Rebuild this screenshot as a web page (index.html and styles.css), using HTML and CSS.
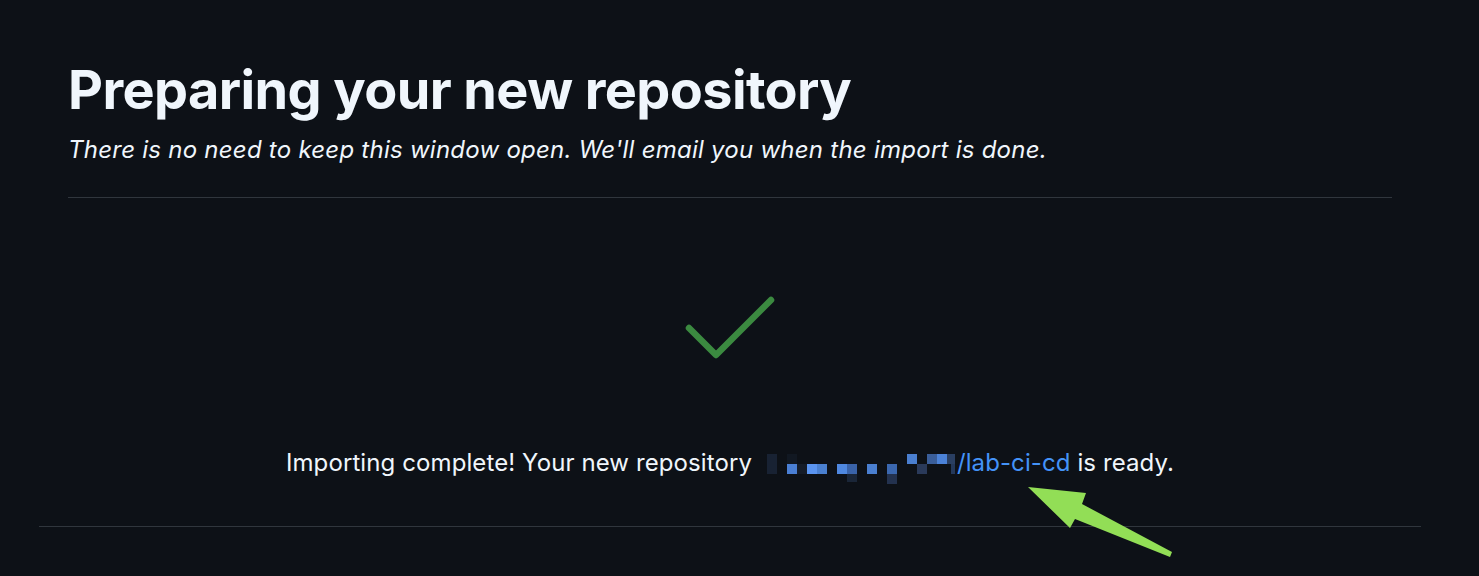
FILE: index.html
```html
<!DOCTYPE html>
<html lang="en">
<head>
<meta charset="utf-8">
<title>Preparing your new repository</title>
<link rel="stylesheet" href="styles.css">
</head>
<body>
<main class="page">
  <div class="inner">
    <header class="head">
      <h1 class="title">Preparing your new repository</h1>
      <p class="subtitle">There is no need to keep this window open. We'll email you when the import is done.</p>
    </header>
    <section class="status">
      <svg class="check" width="96" height="70" viewBox="0 0 96 70" aria-hidden="true">
        <polyline points="7,36 34,63 89,8" fill="none" stroke="#3b8a40" stroke-width="6.5" stroke-linecap="round" stroke-linejoin="round"/>
      </svg>
      <p class="message">Importing complete! Your new repository <a class="repo" href="#"><svg class="redact" width="190" height="30" viewBox="0 0 190 30" aria-hidden="true">
        <rect x="0" y="0" width="10" height="20" fill="#182233"/>
        <rect x="20" y="0" width="10" height="10" fill="#111822"/>
        <rect x="20" y="10" width="10" height="10" fill="#4a7fd4"/>
        <rect x="30" y="10" width="10" height="10" fill="#151c28"/>
        <rect x="40" y="10" width="10" height="10" fill="#5a94f0"/>
        <rect x="50" y="10" width="10" height="10" fill="#4a80d0"/>
        <rect x="70" y="10" width="10" height="10" fill="#4f88e0"/>
        <rect x="80" y="10" width="10" height="10" fill="#3a63a8"/>
        <rect x="80" y="20" width="10" height="8" fill="#1a2638"/>
        <rect x="100" y="10" width="10" height="10" fill="#4a7fd0"/>
        <rect x="120" y="10" width="10" height="10" fill="#3b68b0"/>
        <rect x="120" y="20" width="10" height="10" fill="#23324f"/>
        <rect x="140" y="0" width="10" height="10" fill="#4a7fd0"/>
        <rect x="150" y="10" width="10" height="10" fill="#2a3a5a"/>
        <rect x="160" y="0" width="10" height="10" fill="#3a5e9a"/>
        <rect x="170" y="0" width="10" height="10" fill="#4b82d8"/>
        <rect x="180" y="0" width="8" height="10" fill="#2a3f62"/>
        <rect x="184" y="10" width="4" height="10" fill="#24385a"/>
      </svg>/lab-ci-cd</a> is ready.</p>
    </section>
  </div>
  <svg class="arrow" width="160" height="80" viewBox="0 0 160 80" aria-hidden="true">
    <polygon points="8,7 66,13 62,24 152,72 150,77 55,39 50,48" fill="#92de56"/>
  </svg>
</main>
</body>
</html>
```

FILE: styles.css
```css
html, body {
  margin: 0;
  padding: 0;
  background: #0d1117;
  color: #f0f6fc;
  font-family: Inter, "Noto Sans", "Liberation Sans", sans-serif;
}

.page {
  position: relative;
  width: 1382px;
  margin-left: 39px;
  height: 576px;
}

.inner {
  padding: 0 29px;
  border-bottom: 1px solid #30363d;
  height: 527px;
  box-sizing: border-box;
}

.head {
  padding-top: 54px;
  padding-bottom: 32px;
  border-bottom: 1px solid #30363d;
}

.title {
  margin: 0;
  font-size: 54px;
  font-weight: 700;
  line-height: 72px;
  letter-spacing: -0.6px;
  color: #f0f6fc;
}

.subtitle {
  margin: 9px 0 0;
  font-size: 24px;
  font-style: italic;
  line-height: 30px;
  letter-spacing: 0.25px;
  color: #f0f6fc;
}

.status {
  display: flex;
  flex-direction: column;
  align-items: center;
  padding-top: 94px;
}

.check {
  display: block;
}

.message {
  margin: 86px 0 0;
  font-size: 24px;
  line-height: 30px;
  letter-spacing: 0.1px;
  color: #f0f6fc;
  white-space: nowrap;
}

.repo {
  color: #4493f8;
  text-decoration: none;
}

.redact {
  vertical-align: -13px;
  margin-left: 8px;
}

.arrow {
  position: absolute;
  left: 981px;
  top: 480px;
}
```
